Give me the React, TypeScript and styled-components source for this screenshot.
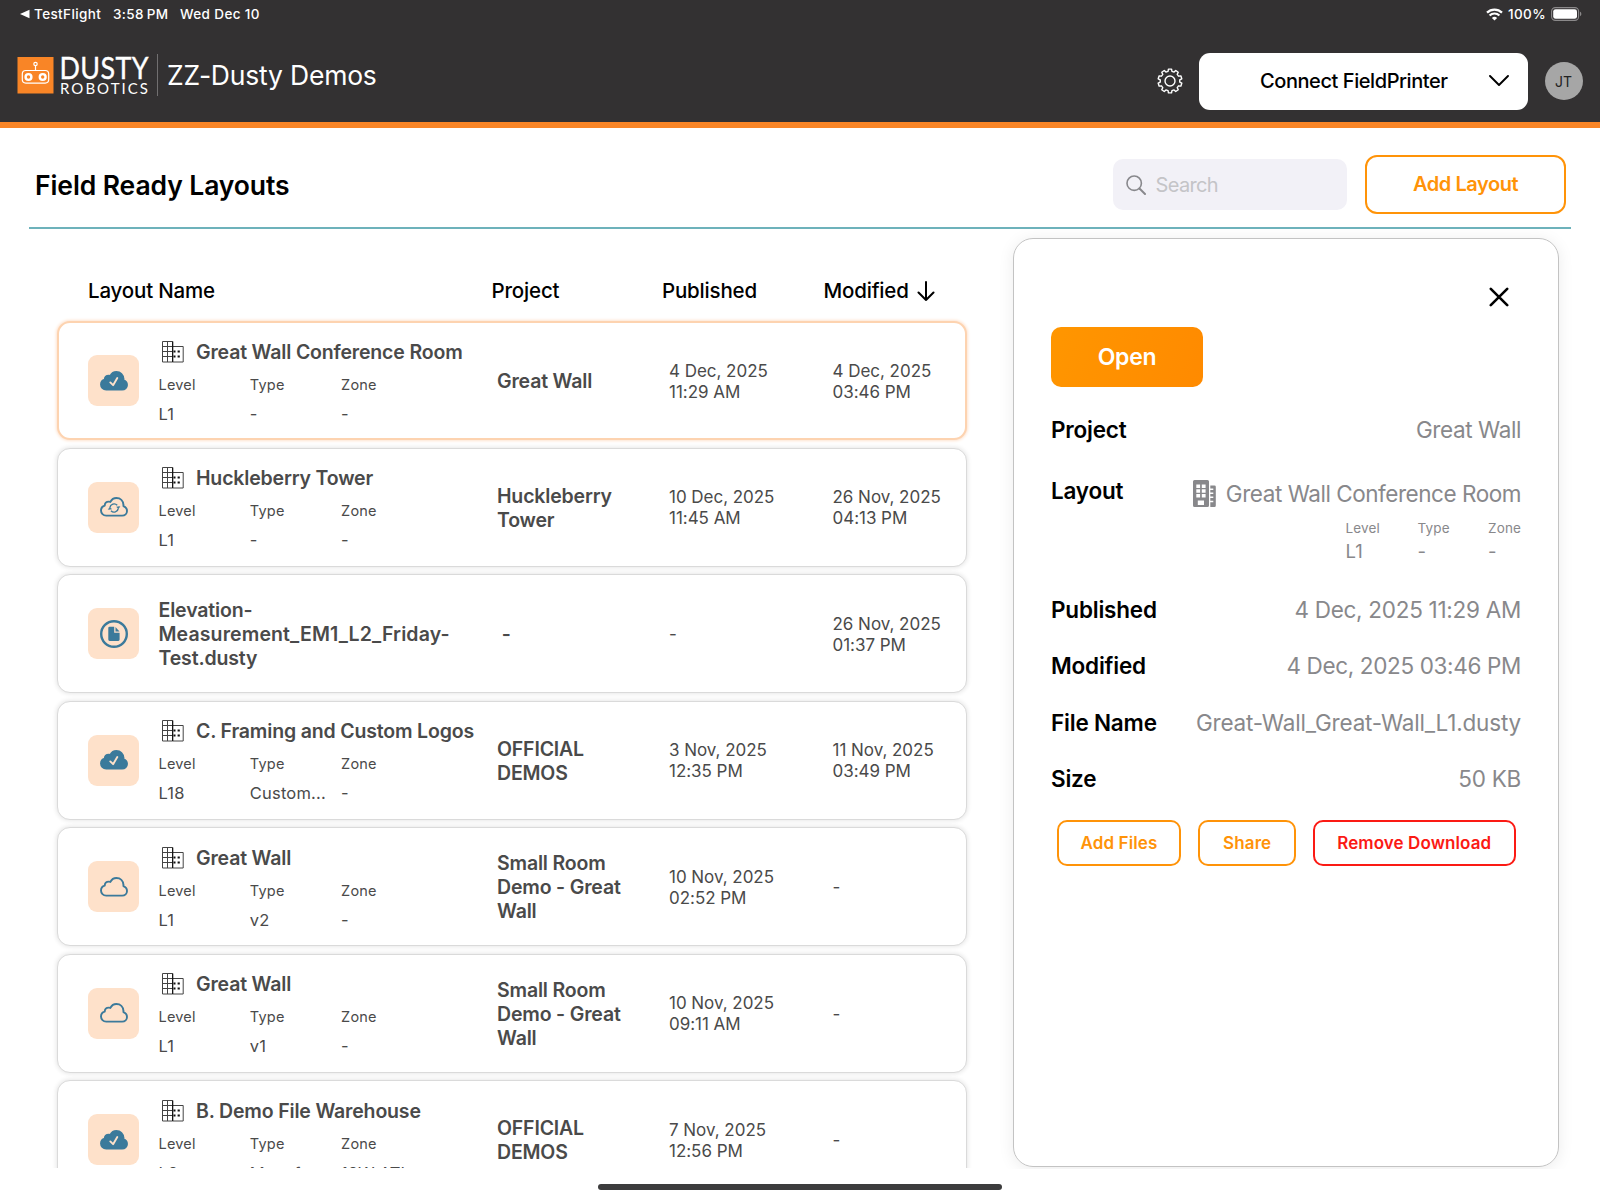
import React from "react";
import styled, { createGlobalStyle, css } from "styled-components";

const Global = createGlobalStyle`
  * { box-sizing: border-box; }
  body { margin: 0; background: #fff; font-family: Inter, "Liberation Sans", sans-serif; overflow: hidden; }
  button { font-family: inherit; background: none; padding: 0; margin: 0; }
`;

const Screen = styled.div`
  width: 1600px;
  height: 1199px;
  display: flex;
  flex-direction: column;
  background: #fff;
  color: #000;
  white-space: nowrap;
  overflow: hidden;
`;

const Header = styled.header`
  height: 128px;
  background: #333132;
  border-bottom: 6px solid #f98526;
  color: #fff;
  display: flex;
  flex-direction: column;
`;

const StatusBar = styled.div`
  height: 28px;
  display: flex;
  justify-content: space-between;
  align-items: center;
  padding: 0 18px 0 20px;
  font-size: 13.5px;
  font-weight: 500;
  line-height: 28px;
`;

const StatusGroup = styled.div`
  display: flex;
  align-items: center;
`;

const StatusText = styled.span<{ $w: number; $gap?: number }>`
  width: ${(p) => p.$w}px;
  margin-left: ${(p) => p.$gap ?? 0}px;
  letter-spacing: 0.38px;
`;

const NavBar = styled.div`
  height: 94px;
  display: flex;
  align-items: center;
  padding: 12px 17.5px 0 17px;
`;

const LogoSvg = styled.svg`
  margin-top: -12px;
  overflow: visible;
`;

const Divider = styled.span`
  width: 1px;
  height: 42px;
  margin: -12px 9px 0 9px;
  background: #716f70;
`;

const OrgName = styled.span`
  margin-top: -12.5px;
  font-size: 26.5px;
  letter-spacing: -0.2px;
  flex: 1;
`;

const PrinterSelect = styled.button`
  width: 328.5px;
  height: 57px;
  margin: 0 17px 0 16.5px;
  border: 0;
  border-radius: 11px;
  background: #fff;
  color: #000;
  display: flex;
  align-items: center;
  justify-content: space-between;
  padding: 0 19px 0 61px;
  font-size: 20px;
  font-weight: 450;
  letter-spacing: -0.43px;
`;

const Avatar = styled.span`
  width: 38px;
  height: 38px;
  border-radius: 50%;
  background: #a6a6a6;
  color: #222;
  display: flex;
  align-items: center;
  justify-content: center;
  font-size: 14px;
`;

const Toolbar = styled.div`
  height: 101px;
  margin: 0 29px 0 29px;
  padding: 13px 5px 0 6px;
  border-bottom: 2px solid #6db2bb;
  display: flex;
  align-items: center;
`;

const PageTitle = styled.h1`
  margin: 0;
  flex: 1;
  padding-top: 1px;
  font-size: 26.5px;
  font-weight: 600;
  letter-spacing: -0.1px;
`;

const SearchBox = styled.div`
  width: 234px;
  height: 51px;
  margin: 0 18px 0 0;
  padding: 1px 0 0 13px;
  border-radius: 10px;
  background: #f2f1f7;
  color: #c4c4c7;
  display: flex;
  align-items: center;
  gap: 9.5px;
  font-size: 20px;
  letter-spacing: -0.65px;
`;

const AddLayout = styled.button`
  width: 201px;
  height: 59px;
  border: 2px solid #ff9308;
  border-radius: 12px;
  color: #ff9308;
  font-size: 20px;
  font-weight: 580;
  letter-spacing: -0.45px;
`;

const Main = styled.main`
  height: 940px;
  display: flex;
  overflow: hidden;
  padding-left: 49px;
`;

const ListPane = styled.section`
  width: 964px;
  height: 939px;
  flex: none;
  overflow: hidden;
`;

const columns = css`
  display: grid;
  grid-template-columns: 403.5px 170.5px 161.5px 1fr;
`;

const HeadRow = styled.div`
  ${columns}
  height: 92px;
  padding: 31px 0 0 39px;
  font-size: 20.5px;
  font-weight: 450;
  letter-spacing: -0.18px;
  line-height: 62px;
`;

const HeadCell = styled.div`
  display: flex;
  align-items: center;
  gap: 8.5px;
`;

const Rows = styled.div`
  display: flex;
  flex-direction: column;
  gap: 7.5px;
  padding-left: 8px;
`;

const Row = styled.article<{ $selected?: boolean }>`
  width: 910px;
  height: 119px;
  flex: none;
  border-radius: 13px;
  background: #fff;
  border: ${(p) => (p.$selected ? "2px solid #fdd3b0" : "1px solid #dadada")};
  box-shadow: ${(p) => (p.$selected ? "0 0 3px 1px #fee3cf" : "0 0 4px 1px #e8e8e8")};
  display: grid;
  grid-template-columns: 70.5px 338.5px 172px 163px 1fr;
  align-items: center;
  padding-left: ${(p) => (p.$selected ? 29 : 30)}px;
  color: #4a4a4a;
`;

const StateTile = styled.div`
  width: 51px;
  height: 51px;
  border-radius: 9px;
  background: #fee1ca;
  display: flex;
  align-items: center;
  justify-content: center;
`;

const Details = styled.div`
  padding-top: 3.8px;
`;

const NameLine = styled.div`
  display: flex;
  align-items: center;
  gap: 12.5px;
  height: 24px;
  padding-left: 3px;
`;

const Name = styled.div`
  font-size: 19.5px;
  font-weight: 570;
  line-height: 24px;
  letter-spacing: -0.17px;
  white-space: pre-line;
`;

const NameRow = styled.div<{ $wide?: boolean }>`
  letter-spacing: ${(p) => (p.$wide ? 0.12 : -0.15)}px;
`;

const ProjectName = styled(Name)`
  padding-top: 1px;
`;

const Meta = styled.div`
  display: grid;
  grid-template-columns: 91.3px 91.3px 91.3px;
  margin-top: 11.7px;
`;

const MetaLabel = styled.span`
  font-size: 14.5px;
  line-height: 18px;
  letter-spacing: 0.2px;
`;

const MetaValue = styled.span`
  font-size: 16.5px;
  line-height: 22px;
  margin-top: 9.2px;
  letter-spacing: 0.2px;
`;

const DateText = styled.div<{ $nudge?: number }>`
  padding: 2.4px 0 0 ${(p) => p.$nudge ?? 0}px;
  font-size: 17px;
  line-height: 21px;
  letter-spacing: -0.03px;
  white-space: pre-line;
`;

const Panel = styled.aside`
  width: 546px;
  height: 929px;
  margin-top: 9px;
  border: 1px solid #c3c3c3;
  border-radius: 20px;
  box-shadow: 0 2px 16px rgba(0, 0, 0, 0.08);
  padding: 48px 37px 0 37px;
  display: flex;
  flex-direction: column;
`;

const CloseRow = styled.div`
  display: flex;
  justify-content: flex-end;
  padding-right: 12px;
  height: 40px;
`;

const OpenButton = styled.button`
  width: 152px;
  height: 60px;
  border: 0;
  border-radius: 10px;
  background: linear-gradient(110deg, #ff9600, #ff8a00);
  color: #fff;
  font-size: 23px;
  font-weight: 600;
  letter-spacing: -0.25px;
  margin-bottom: 15px;
`;

const Field = styled.div<{ $h: number }>`
  height: ${(p) => p.$h}px;
  display: flex;
  justify-content: space-between;
  line-height: 56px;
`;

const FieldLabel = styled.span`
  font-size: 22.5px;
  font-weight: 580;
  letter-spacing: -0.2px;
`;

const FieldValue = styled.span<{ $ls?: number }>`
  color: #88888b;
  font-size: 22.5px;
  letter-spacing: ${(p) => p.$ls ?? -0.28}px;
`;

const LayoutValue = styled.div`
  display: flex;
  flex-direction: column;
  align-items: flex-end;
  color: #88888b;
  padding-top: 3px;
`;

const LayoutName = styled.div`
  display: flex;
  align-items: center;
  gap: 10px;
  height: 56px;
`;

const PanelMeta = styled.div`
  display: grid;
  grid-template-columns: 72px 70.5px auto;
  margin-top: -3.5px;
`;

const PanelMetaLabel = styled.span`
  font-size: 13.5px;
  line-height: 20px;
  letter-spacing: 0.12px;
`;

const PanelMetaValue = styled.span`
  font-size: 18.5px;
  line-height: 26px;
`;

const Actions = styled.div`
  display: flex;
  gap: 17px;
  padding: 0 5.5px;
  margin-top: 13px;
`;

const Action = styled.button<{ $w: number; $danger?: boolean }>`
  width: ${(p) => p.$w}px;
  height: 46px;
  border-radius: 10px;
  border: 2px solid ${(p) => (p.$danger ? "#fb1a14" : "#ff9308")};
  color: ${(p) => (p.$danger ? "#fb1a14" : "#ff9308")};
  font-size: 17px;
  font-weight: 570;
  letter-spacing: 0.1px;
`;

const Footer = styled.footer`
  flex: 1;
  display: flex;
  justify-content: center;
  padding-top: 15px;
`;

const HomeIndicator = styled.span`
  width: 404px;
  height: 6px;
  border-radius: 3px;
  background: #3c3c3d;
`;

const teal = "#3b7a9b";

const Logo = () => (
  <LogoSvg width="131" height="42" viewBox="17 54 131 42" fill="none">
    <rect x="17.5" y="57" width="36" height="36.5" fill="#f98526" />
    <g stroke="#fff" strokeWidth="1.2">
      <circle cx="35.5" cy="64" r="1.7" />
      <path d="M35.5 65.8v4.600" />
      <rect x="22.3" y="70.5" width="26.4" height="12.6" rx="3.5" />
    </g>
    <circle cx="28.5" cy="77" r="2.9" stroke="#fff" strokeWidth="2.4" />
    <circle cx="42.7" cy="77" r="2.9" stroke="#fff" strokeWidth="2.4" />
    <g transform="translate(59.5 78.500) scale(.88 1)">
      <text fill="#fff" stroke="#fff" strokeWidth=".4" fontFamily="Lato, sans-serif" fontSize="30.500" textLength="101" lengthAdjust="spacing">DUSTY</text>
    </g>
    <text x="60" y="93.700" fill="#fff" fontFamily="Lato, sans-serif" fontSize="15" textLength="88" lengthAdjust="spacing">ROBOTICS</text>
  </LogoSvg>
);

const gearPath = (() => {
  const n = 10;
  const pts: string[] = [];
  for (let i = 0; i < n; i++) {
    const a = (i * 2 * Math.PI) / n - Math.PI / 2;
    [[-0.2, 9.8], [-0.13, 12], [0.13, 12], [0.2, 9.8]].forEach(([d, r]) =>
      pts.push(`${(13 + r * Math.cos(a + d)).toFixed(2)} ${(13 + r * Math.sin(a + d)).toFixed(2)}`)
    );
  }
  return `M${pts.join("L")}Z`;
})();

const Gear = () => (
  <svg width="26" height="26" viewBox="0 0 26 26" fill="none" stroke="#fff" strokeWidth="1.4" strokeLinejoin="round">
    <path d={gearPath} />
    <circle cx="13" cy="13" r="5" />
  </svg>
);

const Wifi = () => (
  <svg width="17" height="13" viewBox="0 0 17 13" fill="none" stroke="#fff" strokeWidth="2.2">
    <path d="M1 4.600a10.800 10.800 0 0 1 15 0M3.600 7.500a7 7 0 0 1 9.800 0" />
    <path d="M8.500 12.600 5.900 10a3.600 3.600 0 0 1 5.200 0z" fill="#fff" stroke="none" />
  </svg>
);

const Battery = () => (
  <svg width="31" height="14" viewBox="0 0 31 14" fill="none">
    <rect x="0.6" y="0.6" width="27" height="12.8" rx="3.8" stroke="#8b898a" strokeWidth="1.1" />
    <rect x="2.2" y="2.2" width="23.8" height="9.6" rx="2.4" fill="#fff" />
    <path d="M29 4.800c1.800.5 1.800 3.900 0 4.400z" fill="#8b898a" />
  </svg>
);

const BuildingOutline = () => (
  <svg width="22" height="22" viewBox="0 0 22 22" fill="none" stroke="#444" strokeWidth="1">
    <path d="M.5.5h10v20.500H.5zM10.500 5.500h10.700V21H10.500M5.500.5V21M.5 5.500h10M.5 10.500h10M.5 15.500h10" />
    <path d="M10.700.5V21" stroke="#111" strokeWidth="1.200" />
    <path d="M11.500 10.500h2M11.500 15.500h2M15.600 10.500h2.200M15.600 15.500h2.200" stroke="#111" strokeWidth="2" />
  </svg>
);

const BuildingSolid = () => (
  <svg width="23" height="27" viewBox="0 0 23 27" fill="#88888b">
    <path fillRule="evenodd" d="M1.500 0h13Q16 0 16 1.500V25.500Q16 27 14.500 27h-13Q0 27 0 25.500V1.500Q0 0 1.500 0zM3.300 4.500h3.800v3.400H3.300zM8.800 4.500h3.800v3.400H8.800zM3.300 9.300h3.800v3.400H3.300zM8.800 9.300h3.800v3.400H8.800zM3.300 14.100h3.800v3.400H3.300zM8.800 14.100h3.800v3.400H8.800zM4.800 20.500h6.200V25H4.800z" />
    <path d="M17.300 5.500h4.200q1.300 0 1.300 1.300v18.700q0 1.500-1.300 1.500h-4.200v-4.800h3v-1.500h-3v-2.600h3v-1.500h-3v-2.600h3v-1.500h-3v-2.600h3V8.400h-3z" />
  </svg>
);

const cloud = "M6.200 18.600C3.200 18.600 1 16.400 1 13.600c0-2.400 1.500-4.300 3.700-4.900C4.800 6.300 6.600 4.600 8.800 4.600c.6 0 1.100.1 1.600.3C11.600 2.500 13.800 1 16.400 1c4 0 6.800 2.900 7 6.800.1.500 0 .9 0 1.300 2.100.8 3.600 2.500 3.600 4.800 0 2.700-2.100 4.700-4.900 4.700z";

type State = "done" | "sync" | "cloud" | "file";

const StateIcon = ({ state }: { state: State }) => {
  if (state === "file")
    return (
      <svg width="28" height="28" viewBox="0 0 28 28" fill="none">
        <circle cx="14" cy="14" r="12.800" stroke={teal} strokeWidth="2.400" />
        <path d="M9.600 6.800h4.600V12.800h5.400v6.800q0 1.300-1.300 1.300H9.600q-1.300 0-1.300-1.300V8.100q0-1.300 1.300-1.300z" fill={teal} />
        <path d="M15.500 6.900l4 4.600h-4z" fill={teal} />
      </svg>
    );
  return (
    <svg width="28" height="20" viewBox="0 0 28 20" fill="none" strokeLinecap="round" strokeLinejoin="round">
      <path d={cloud} fill={state === "done" ? teal : "none"} stroke={teal} strokeWidth="1.900" />
      {state === "done" && <path d="M10.300 11.400l2.800 2.800 4.200-7.200" stroke="#fee1ca" strokeWidth="1.900" />}
      {state === "sync" && (
        <g stroke={teal} strokeWidth="1.400" strokeLinecap="butt">
          <path d="M9.900 10.600a4.200 4.200 0 0 1 7.300-2.300M18.300 11.400a4.200 4.200 0 0 1-7.300 2.300" />
          <path d="M16.700 10l1.800 1.500 1.300-1.900zM11.500 12l-1.800-1.500-1.300 1.900z" fill={teal} strokeWidth=".6" />
        </g>
      )}
    </svg>
  );
};

interface Item {
  state: State;
  name: string;
  meta?: [string, string, string];
  project: string;
  published: string;
  modified: string;
}

const items: Item[] = [
  { state: "done", name: "Great Wall Conference Room", meta: ["L1", "-", "-"], project: "Great Wall", published: "4 Dec, 2025\n11:29 AM", modified: "4 Dec, 2025\n03:46 PM" },
  { state: "sync", name: "Huckleberry Tower", meta: ["L1", "-", "-"], project: "Huckleberry\nTower", published: "10 Dec, 2025\n11:45 AM", modified: "26 Nov, 2025\n04:13 PM" },
  { state: "file", name: "Elevation-\nMeasurement_EM1_L2_Friday-\nTest.dusty", project: "\u00a0-", published: "-", modified: "26 Nov, 2025\n01:37 PM" },
  { state: "done", name: "C. Framing and Custom Logos", meta: ["L18", "Custom...", "-"], project: "OFFICIAL\nDEMOS", published: "3 Nov, 2025\n12:35 PM", modified: "11 Nov, 2025\n03:49 PM" },
  { state: "cloud", name: "Great Wall", meta: ["L1", "v2", "-"], project: "Small Room\nDemo - Great\nWall", published: "10 Nov, 2025\n02:52 PM", modified: "-" },
  { state: "cloud", name: "Great Wall", meta: ["L1", "v1", "-"], project: "Small Room\nDemo - Great\nWall", published: "10 Nov, 2025\n09:11 AM", modified: "-" },
  { state: "done", name: "B. Demo File Warehouse", meta: ["L2", "Manuf...", "12W ATL"], project: "OFFICIAL\nDEMOS", published: "7 Nov, 2025\n12:56 PM", modified: "-" },
];

const labels = ["Level", "Type", "Zone"];

export default function App() {
  return (
    <Screen>
      <Global />
      <Header>
        <StatusBar>
          <StatusGroup>
            <svg width="10" height="10" viewBox="0 0 10 10"><path d="M0 5L9.500 .8V9.200z" fill="#fff" /></svg>
            <StatusText $w={79} $gap={4}>TestFlight</StatusText>
            <StatusText $w={67}>{"3:58\u2009PM"}</StatusText>
            <StatusText $w={90}>Wed Dec 10</StatusText>
          </StatusGroup>
          <StatusGroup>
            <Wifi />
            <StatusText $w={43} $gap={5}>100%</StatusText>
            <Battery />
          </StatusGroup>
        </StatusBar>
        <NavBar>
          <Logo />
          <Divider />
          <OrgName>ZZ-Dusty Demos</OrgName>
          <Gear />
          <PrinterSelect>
            Connect FieldPrinter
            <svg width="20" height="12" viewBox="0 0 20 12" fill="none" stroke="#000" strokeWidth="1.900" strokeLinecap="round" strokeLinejoin="round"><path d="M1 1l9 9 9-9" /></svg>
          </PrinterSelect>
          <Avatar>JT</Avatar>
        </NavBar>
      </Header>
      <Toolbar>
        <PageTitle>Field Ready Layouts</PageTitle>
        <SearchBox>
          <svg width="20" height="20" viewBox="0 0 20 20" fill="none" stroke="#88888c" strokeWidth="1.600" strokeLinecap="round"><circle cx="8.200" cy="8.200" r="7.200" /><path d="M13.500 13.500l5.500 5.500" strokeWidth="2" /></svg>
          Search
        </SearchBox>
        <AddLayout>Add Layout</AddLayout>
      </Toolbar>
      <Main>
        <ListPane>
          <HeadRow>
            <HeadCell>Layout Name</HeadCell>
            <HeadCell>Project</HeadCell>
            <HeadCell>Published</HeadCell>
            <HeadCell>
              Modified
              <svg width="18" height="20" viewBox="0 0 18 20" fill="none" stroke="#000" strokeWidth="2" strokeLinecap="round" strokeLinejoin="round"><path d="M9 1v18M1.500 11.500L9 19l7.500-7.500" /></svg>
            </HeadCell>
          </HeadRow>
          <Rows>
            {items.map((it, i) => (
              <Row key={i} $selected={i === 0}>
                <StateTile><StateIcon state={it.state} /></StateTile>
                {it.meta ? (
                  <Details>
                    <NameLine><BuildingOutline /><Name>{it.name}</Name></NameLine>
                    <Meta>
                      {labels.map((l) => <MetaLabel key={l}>{l}</MetaLabel>)}
                      {it.meta.map((v, k) => <MetaValue key={k}>{v}</MetaValue>)}
                    </Meta>
                  </Details>
                ) : (
                  <Name>
                    {it.name.split("\n").map((line) => (
                      <NameRow key={line} $wide={line.includes("_")}>{line}</NameRow>
                    ))}
                  </Name>
                )}
                <ProjectName>{it.project}</ProjectName>
                <DateText>{it.published}</DateText>
                <DateText $nudge={0.5}>{it.modified}</DateText>
              </Row>
            ))}
          </Rows>
        </ListPane>
        <Panel>
          <CloseRow>
            <svg width="20" height="20" viewBox="0 0 20 20" stroke="#000" strokeWidth="2.600" strokeLinecap="round"><path d="M1.800 1.800l16.400 16.400M18.200 1.800L1.800 18.200" /></svg>
          </CloseRow>
          <OpenButton>Open</OpenButton>
          <Field $h={60.5}><FieldLabel>Project</FieldLabel><FieldValue $ls={-0.4}>Great Wall</FieldValue></Field>
          <Field $h={119.7}>
            <FieldLabel>Layout</FieldLabel>
            <LayoutValue>
              <LayoutName><BuildingSolid /><FieldValue $ls={-0.46}>Great Wall Conference Room</FieldValue></LayoutName>
              <PanelMeta>
                {labels.map((l) => <PanelMetaLabel key={l}>{l}</PanelMetaLabel>)}
                <PanelMetaValue>L1</PanelMetaValue><PanelMetaValue>-</PanelMetaValue><PanelMetaValue>-</PanelMetaValue>
              </PanelMeta>
            </LayoutValue>
          </Field>
          <Field $h={56.2}><FieldLabel>Published</FieldLabel><FieldValue>4 Dec, 2025 11:29 AM</FieldValue></Field>
          <Field $h={56.2}><FieldLabel>Modified</FieldLabel><FieldValue $ls={-0.35}>4 Dec, 2025 03:46 PM</FieldValue></Field>
          <Field $h={56.2}><FieldLabel>File Name</FieldLabel><FieldValue $ls={-0.17}>Great-Wall_Great-Wall_L1.dusty</FieldValue></Field>
          <Field $h={56.2}><FieldLabel>Size</FieldLabel><FieldValue>50 KB</FieldValue></Field>
          <Actions>
            <Action $w={125.5}>Add Files</Action>
            <Action $w={98}>Share</Action>
            <Action $w={203.5} $danger>Remove Download</Action>
          </Actions>
        </Panel>
      </Main>
      <Footer><HomeIndicator /></Footer>
    </Screen>
  );
}
